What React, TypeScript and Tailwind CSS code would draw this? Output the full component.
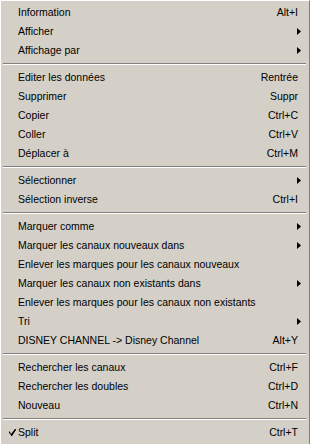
import React from "react";

type Item =
  | { sep: true }
  | { label: string; shortcut?: string; sub?: boolean; checked?: boolean; sep?: false };

const items: Item[] = [
  { label: "Information", shortcut: "Alt+I" },
  { label: "Afficher", sub: true },
  { label: "Affichage par", sub: true },
  { sep: true },
  { label: "Editer les données", shortcut: "Rentrée" },
  { label: "Supprimer", shortcut: "Suppr" },
  { label: "Copier", shortcut: "Ctrl+C" },
  { label: "Coller", shortcut: "Ctrl+V" },
  { label: "Déplacer à", shortcut: "Ctrl+M" },
  { sep: true },
  { label: "Sélectionner", sub: true },
  { label: "Sélection inverse", shortcut: "Ctrl+I" },
  { sep: true },
  { label: "Marquer comme", sub: true },
  { label: "Marquer les canaux nouveaux dans", sub: true },
  { label: "Enlever les marques pour les canaux nouveaux" },
  { label: "Marquer les canaux non existants dans", sub: true },
  { label: "Enlever les marques pour les canaux non existants" },
  { label: "Tri", sub: true },
  { label: "DISNEY CHANNEL -> Disney Channel", shortcut: "Alt+Y" },
  { sep: true },
  { label: "Rechercher les canaux", shortcut: "Ctrl+F" },
  { label: "Rechercher les doubles", shortcut: "Ctrl+D" },
  { label: "Nouveau", shortcut: "Ctrl+N" },
  { sep: true },
  { label: "Split", shortcut: "Ctrl+T", checked: true },
];

function Arrow() {
  return (
    <svg width="4" height="7" viewBox="0 0 4 7" className="block">
      <path d="M0 0 L4 3.5 L0 7 Z" fill="#000" />
    </svg>
  );
}

function Check() {
  return (
    <svg width="7" height="7" viewBox="0 0 7 7" className="block">
      <path d="M0 2 L0 4 L2 6 L2 7 L3 7 L7 1 L7 0 L6 0 L2 5 L1 3 L0 2Z" fill="#000" />
    </svg>
  );
}

export default function App() {
  return (
    <div
      className="w-[310px] h-[444px] bg-[#d4d0c8] border-t border-l border-t-white border-l-white border-r border-r-[#808080] overflow-hidden pt-[2px] pl-[1px] pr-[2px] text-[10.5px] text-black"
      style={{ fontFamily: '"Liberation Sans", Arial, sans-serif' }}
    >
      {items.map((it, i) =>
        "label" in it ? (
          <div key={i} className="h-[19px] flex items-center relative">
            <div className="w-[16px] flex justify-end pr-[2px] shrink-0">
              {it.checked ? <Check /> : null}
            </div>
            <span className="flex-1 whitespace-nowrap">{it.label}</span>
            {it.shortcut ? (
              <span className="whitespace-nowrap pr-[9px]">{it.shortcut}</span>
            ) : null}
            {it.sub ? (
              <span className="pr-[6px]">
                <Arrow />
              </span>
            ) : null}
          </div>
        ) : (
          <div key={i} className="h-[8px] flex flex-col justify-center pl-[1px] pr-[1px]">
            <div className="h-px bg-[#808080]" />
            <div className="h-px bg-white" />
          </div>
        )
      )}
    </div>
  );
}
